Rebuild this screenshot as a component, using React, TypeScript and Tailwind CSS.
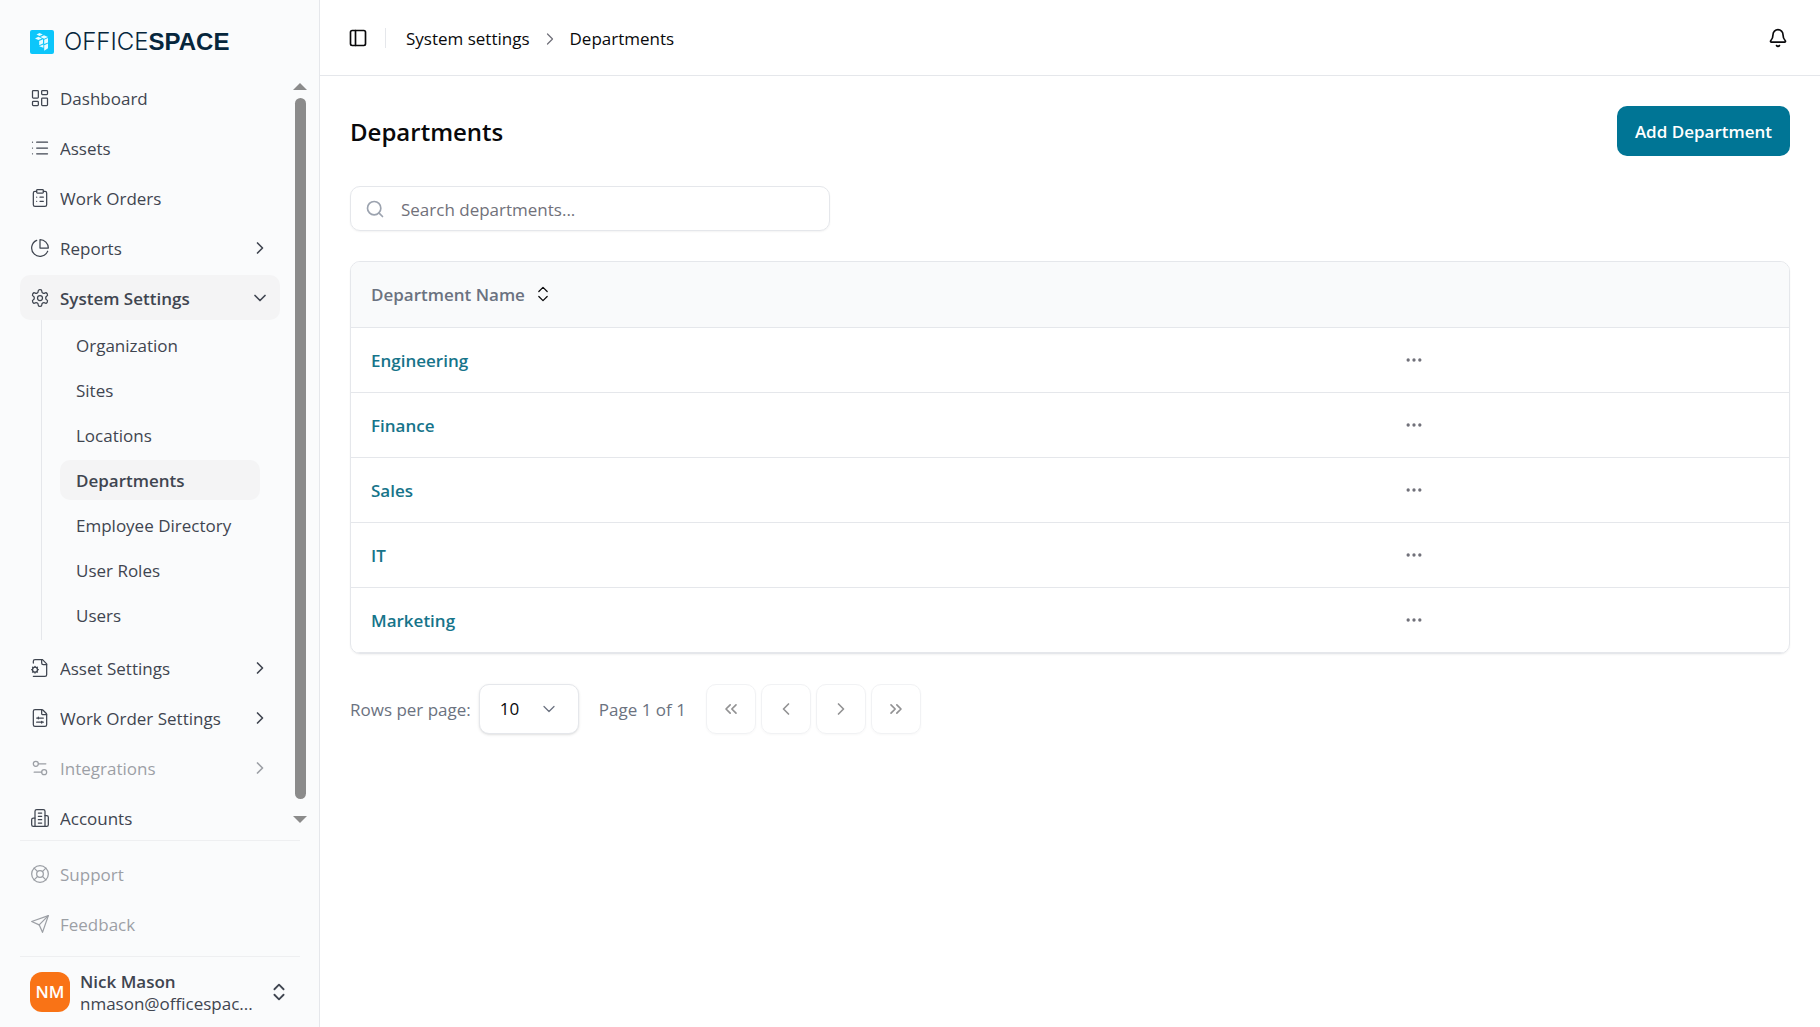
import type { ReactNode } from "react";
import {
  Bell,
  ChevronDown,
  ChevronLeft,
  ChevronRight,
  ChevronsLeft,
  ChevronsRight,
  ChevronsUpDown,
  ClipboardList,
  Ellipsis,
  FileSliders,
  LayoutDashboard,
  LifeBuoy,
  List,
  PanelLeft,
  Search,
  Settings2,
  type LucideIcon,
} from "lucide-react";

type IconProps = { className?: string; strokeWidth?: number };

function StrokeIcon({ className, strokeWidth = 2, children }: IconProps & { children: ReactNode }) {
  return (
    <svg
      xmlns="http://www.w3.org/2000/svg"
      viewBox="0 0 24 24"
      fill="none"
      stroke="currentColor"
      strokeWidth={strokeWidth}
      strokeLinecap="round"
      strokeLinejoin="round"
      className={className}
      aria-hidden="true"
    >
      {children}
    </svg>
  );
}

function PieIcon(props: IconProps) {
  return (
    <StrokeIcon {...props}>
      <path d="M21.21 15.89A10 10 0 1 1 8 2.83" />
      <path d="M22 12A10 10 0 0 0 12 2v10z" />
    </StrokeIcon>
  );
}

function GearIcon(props: IconProps) {
  return (
    <StrokeIcon {...props}>
      <path d="M12.22 2h-.44a2 2 0 0 0-2 2v.18a2 2 0 0 1-1 1.73l-.43.25a2 2 0 0 1-2 0l-.15-.08a2 2 0 0 0-2.73.73l-.22.38a2 2 0 0 0 .73 2.73l.15.1a2 2 0 0 1 1 1.72v.51a2 2 0 0 1-1 1.74l-.15.09a2 2 0 0 0-.73 2.73l.22.38a2 2 0 0 0 2.73.73l.15-.08a2 2 0 0 1 2 0l.43.25a2 2 0 0 1 1 1.73V20a2 2 0 0 0 2 2h.44a2 2 0 0 0 2-2v-.18a2 2 0 0 1 1-1.73l.43-.25a2 2 0 0 1 2 0l.15.08a2 2 0 0 0 2.73-.73l.22-.39a2 2 0 0 0-.73-2.73l-.15-.08a2 2 0 0 1-1-1.74v-.5a2 2 0 0 1 1-1.74l.15-.09a2 2 0 0 0 .73-2.73l-.22-.38a2 2 0 0 0-2.73-.73l-.15.08a2 2 0 0 1-2 0l-.43-.25a2 2 0 0 1-1-1.73V4a2 2 0 0 0-2-2z" />
      <circle cx="12" cy="12" r="3" />
    </StrokeIcon>
  );
}

function FileGearIcon(props: IconProps) {
  return (
    <StrokeIcon {...props}>
      <path d="M4 6V4a2 2 0 0 1 2-2h9l5 5v13a2 2 0 0 1-2 2H4" />
      <path d="M14 2v4a2 2 0 0 0 2 2h4" />
      <circle cx="6" cy="14" r="3" />
      <path d="M6 10v1M6 17v1M10 14H9M3 14H2M9 11l-.88.88M3.88 16.12 3 17M9 17l-.88-.88M3.88 11.88 3 11" />
    </StrokeIcon>
  );
}

function BuildingIcon(props: IconProps) {
  return (
    <StrokeIcon {...props}>
      <path d="M6 22V4a2 2 0 0 1 2-2h8a2 2 0 0 1 2 2v18Z" />
      <path d="M6 12H4a2 2 0 0 0-2 2v6a2 2 0 0 0 2 2h2" />
      <path d="M18 9h2a2 2 0 0 1 2 2v9a2 2 0 0 1-2 2h-2" />
      <path d="M10 6h4M10 10h4M10 14h4M10 18h4" />
    </StrokeIcon>
  );
}

function SendIcon(props: IconProps) {
  return (
    <StrokeIcon {...props}>
      <path d="m22 2-7 20-4-9-9-4Z" />
      <path d="M22 2 11 13" />
    </StrokeIcon>
  );
}

function Logo() {
  return (
    <a href="#" className="flex items-center gap-[10px] text-[#06263c]">
      <svg width="24" height="24" viewBox="0 0 24 24" aria-hidden="true">
        <rect width="24" height="24" rx="2" fill="#0cc6fb" />
        <g fill="#e9fbff">
          <path d="m9.500 3 3.300 1.600-3.300 1.500-3-1.500z" />
          <path d="m14 5.200 4 1.800-3.800 1.800L10.300 7z" />
          <path d="m8.300 6.800 3.600 1.700-3.500 1.600L5 8.500z" />
          <path d="m9.200 11 3.800-1.800v4.300l-3.800 1.700z" />
          <path d="m14.200 9.700 3.800-1.800v4.500l-3.800 1.600z" />
          <path d="m9.200 16.300 4.200-1.800v3.300z" />
          <path d="m14.200 15.200 3.800-1.700v4.700l-3.800 2.500z" />
        </g>
      </svg>
      <span className="text-2xl">
        <span className="font-['Inter'] font-light">OFFICE</span>
        <b className="font-['Liberation_Sans']">SPACE</b>
      </span>
    </a>
  );
}

type NavItem = {
  label: string;
  icon: LucideIcon | ((props: IconProps) => ReactNode);
  expandable?: boolean;
  disabled?: boolean;
  children?: string[];
};

const navItems: NavItem[] = [
  { label: "Dashboard", icon: LayoutDashboard },
  { label: "Assets", icon: List },
  { label: "Work Orders", icon: ClipboardList },
  { label: "Reports", icon: PieIcon, expandable: true },
  {
    label: "System Settings",
    icon: GearIcon,
    expandable: true,
    children: ["Organization", "Sites", "Locations", "Departments", "Employee Directory", "User Roles", "Users"],
  },
  { label: "Asset Settings", icon: FileGearIcon, expandable: true },
  { label: "Work Order Settings", icon: FileSliders, expandable: true },
  { label: "Integrations", icon: Settings2, expandable: true, disabled: true },
  { label: "Accounts", icon: BuildingIcon },
];

const helpItems: NavItem[] = [
  { label: "Support", icon: LifeBuoy, disabled: true },
  { label: "Feedback", icon: SendIcon, disabled: true },
];

const departments = ["Engineering", "Finance", "Sales", "IT", "Marketing"];

function NavButton({ item }: { item: NavItem }) {
  const Icon = item.icon;
  const Chevron = item.children ? ChevronDown : ChevronRight;
  return (
    <button
      type="button"
      disabled={item.disabled}
      className={`flex h-[45px] w-full shrink-0 items-center gap-[10px] rounded-[10px] px-[10px] text-left disabled:opacity-50 ${
        item.children ? "bg-[#f4f4f5] font-semibold" : ""
      }`}
    >
      <Icon className="size-5 shrink-0" strokeWidth={1.5} />
      <span className="flex-1 truncate pt-0.5">{item.label}</span>
      {item.expandable && <Chevron className="size-5 shrink-0" strokeWidth={2} />}
    </button>
  );
}

function ScrollRail() {
  return (
    <div className="flex w-5 flex-col items-center pt-2 pb-[17px] text-[#8b8b8b]" aria-hidden="true">
      <svg width="14" height="7" viewBox="0 0 14 7" fill="currentColor">
        <path d="M7 0l7 7H0z" />
      </svg>
      <div className="mt-2 mb-[17px] w-[11px] flex-1 rounded-full bg-[#8b8b8b]" />
      <svg width="14" height="7" viewBox="0 0 14 7" fill="currentColor">
        <path d="M0 0h14L7 7z" />
      </svg>
    </div>
  );
}

function Sidebar() {
  return (
    <aside className="flex h-full w-80 shrink-0 flex-col border-r border-[#e5e7eb] bg-[#fafbfc] text-[#3f4550]">
      <div className="flex h-[75px] shrink-0 items-center px-[30px] pt-2">
        <Logo />
      </div>

      <div className="flex min-h-0 flex-1 pr-[9px]">
        <nav className="flex min-w-0 flex-1 flex-col gap-[5px] overflow-hidden pr-[10px] pl-5">
          {navItems.map((item) => (
            <div key={item.label}>
              <NavButton item={item} />
              {item.children && (
                <ul className="mr-5 ml-[21px] flex flex-col gap-[5px] border-l border-[#e5e7eb] py-[5px] pl-[18px]">
                  {item.children.map((child) => (
                    <li key={child}>
                      <a
                        href="#"
                        className={`flex h-10 items-center rounded-[10px] px-4 pt-0.5 ${
                          child === "Departments" ? "bg-[#f4f4f5] font-semibold" : ""
                        }`}
                      >
                        {child}
                      </a>
                    </li>
                  ))}
                </ul>
              )}
            </div>
          ))}
        </nav>
        <ScrollRail />
      </div>

      <div className="mr-[19px] ml-5 flex flex-col gap-[5px] border-t border-[#eeeff1] py-[10px]">
        {helpItems.map((item) => (
          <NavButton key={item.label} item={item} />
        ))}
      </div>

      <button
        type="button"
        className="mr-[19px] ml-5 flex h-[71px] shrink-0 items-center gap-[10px] border-t border-[#eeeff1] px-[10px] text-left"
      >
        <span className="flex size-10 shrink-0 items-center justify-center rounded-xl bg-[#f97316] font-semibold text-white">
          NM
        </span>
        <span className="pt-0.5 leading-[22px]">
          <span className="block font-semibold">Nick Mason</span>
          <span className="block">nmason@officespac...</span>
        </span>
        <ChevronsUpDown className="ml-auto size-[22px] shrink-0" />
      </button>
    </aside>
  );
}

function Header() {
  return (
    <header className="flex h-[76px] shrink-0 items-center border-b border-[#e5e7eb] px-7">
      <button type="button" aria-label="Toggle sidebar">
        <PanelLeft className="size-5" />
      </button>
      <div className="mr-5 ml-[17px] h-5 w-px bg-[#e5e7eb]" />
      <nav className="flex items-center gap-[10px] pt-0.5" aria-label="Breadcrumb">
        <a href="#">System settings</a>
        <ChevronRight className="size-5 text-[#71717a]" strokeWidth={1.5} />
        <span>Departments</span>
      </nav>
      <button type="button" className="mr-1 ml-auto" aria-label="Notifications">
        <Bell className="size-5" />
      </button>
    </header>
  );
}

function DepartmentsTable() {
  return (
    <div className="overflow-hidden rounded-[10px] border border-[#e5e7eb] shadow-xs">
      <table className="w-full table-fixed text-left">
        <thead className="bg-[#f9fafb] text-[#6b7280]">
          <tr className="h-[65px] border-b border-[#e5e7eb]">
            <th className="w-[72%] px-5 font-semibold">
              <button type="button" className="flex items-center gap-2">
                <span className="pt-0.5">Department Name</span>
                <ChevronsUpDown className="size-5 text-[#09090b]" strokeWidth={1.5} />
              </button>
            </th>
            <th aria-label="Actions" />
          </tr>
        </thead>
        <tbody>
          {departments.map((name) => (
            <tr key={name} className="h-[65px] border-b border-[#e5e7eb]">
              <td className="px-5 pt-0.5">
                <a href="#" className="font-semibold text-[#16748a]">
                  {name}
                </a>
              </td>
              <td className="px-[18px]">
                <button type="button" className="block text-[#71717a]" aria-label={`Actions for ${name}`}>
                  <Ellipsis className="size-5" />
                </button>
              </td>
            </tr>
          ))}
        </tbody>
      </table>
    </div>
  );
}

const pagerButtons = [
  { label: "First page", icon: ChevronsLeft },
  { label: "Previous page", icon: ChevronLeft },
  { label: "Next page", icon: ChevronRight },
  { label: "Last page", icon: ChevronsRight },
];

function Pagination() {
  return (
    <div className="flex items-center gap-5 text-[#6b7280]">
      <div className="flex items-center gap-2">
        <label htmlFor="rows" className="pt-0.5">
          Rows per page:
        </label>
        <div className="relative">
          <select
            id="rows"
            defaultValue="10"
            className="h-[50px] w-[100px] appearance-none rounded-[10px] border border-[#e5e7eb] bg-white px-5 text-[#09090b] shadow-sm"
          >
            <option>10</option>
            <option>20</option>
            <option>50</option>
          </select>
          <ChevronDown className="pointer-events-none absolute top-[15px] right-5 size-5" strokeWidth={1.5} />
        </div>
      </div>
      <span className="pt-0.5">Page 1 of 1</span>
      <div className="flex gap-[5px]">
        {pagerButtons.map(({ label, icon: Icon }) => (
          <button
            key={label}
            type="button"
            disabled
            aria-label={label}
            className="flex size-[50px] items-center justify-center rounded-[10px] border border-[#e5e7eb] text-[#27272a] shadow-xs disabled:opacity-50"
          >
            <Icon className="size-5" />
          </button>
        ))}
      </div>
    </div>
  );
}

export default function App() {
  return (
    <div className="flex h-screen overflow-hidden bg-white font-['Open_Sans','Noto_Sans',sans-serif] text-[17px] leading-6 text-[#09090b]">
      <Sidebar />
      <div className="flex min-w-0 flex-1 flex-col">
        <Header />
        <main className="flex flex-1 flex-col gap-[30px] overflow-auto p-[30px]">
          <div className="flex items-center justify-between">
            <h1 className="pt-0.5 text-2xl font-semibold">Departments</h1>
            <button type="button" className="h-[50px] rounded-[10px] bg-[#007595] px-[18px] pt-0.5 font-semibold text-white">
              Add Department
            </button>
          </div>
          <label className="flex h-[45px] w-[480px] items-center gap-4 rounded-[10px] border border-[#e5e7eb] px-[14px] shadow-xs">
            <Search className="size-5 shrink-0 text-[#9ca3af]" />
            <input
              type="text"
              aria-label="Search departments"
              placeholder="Search departments..."
              className="min-w-0 flex-1 bg-transparent pt-0.5 outline-none placeholder:text-[#71717a]"
            />
          </label>
          <DepartmentsTable />
          <Pagination />
        </main>
      </div>
    </div>
  );
}
